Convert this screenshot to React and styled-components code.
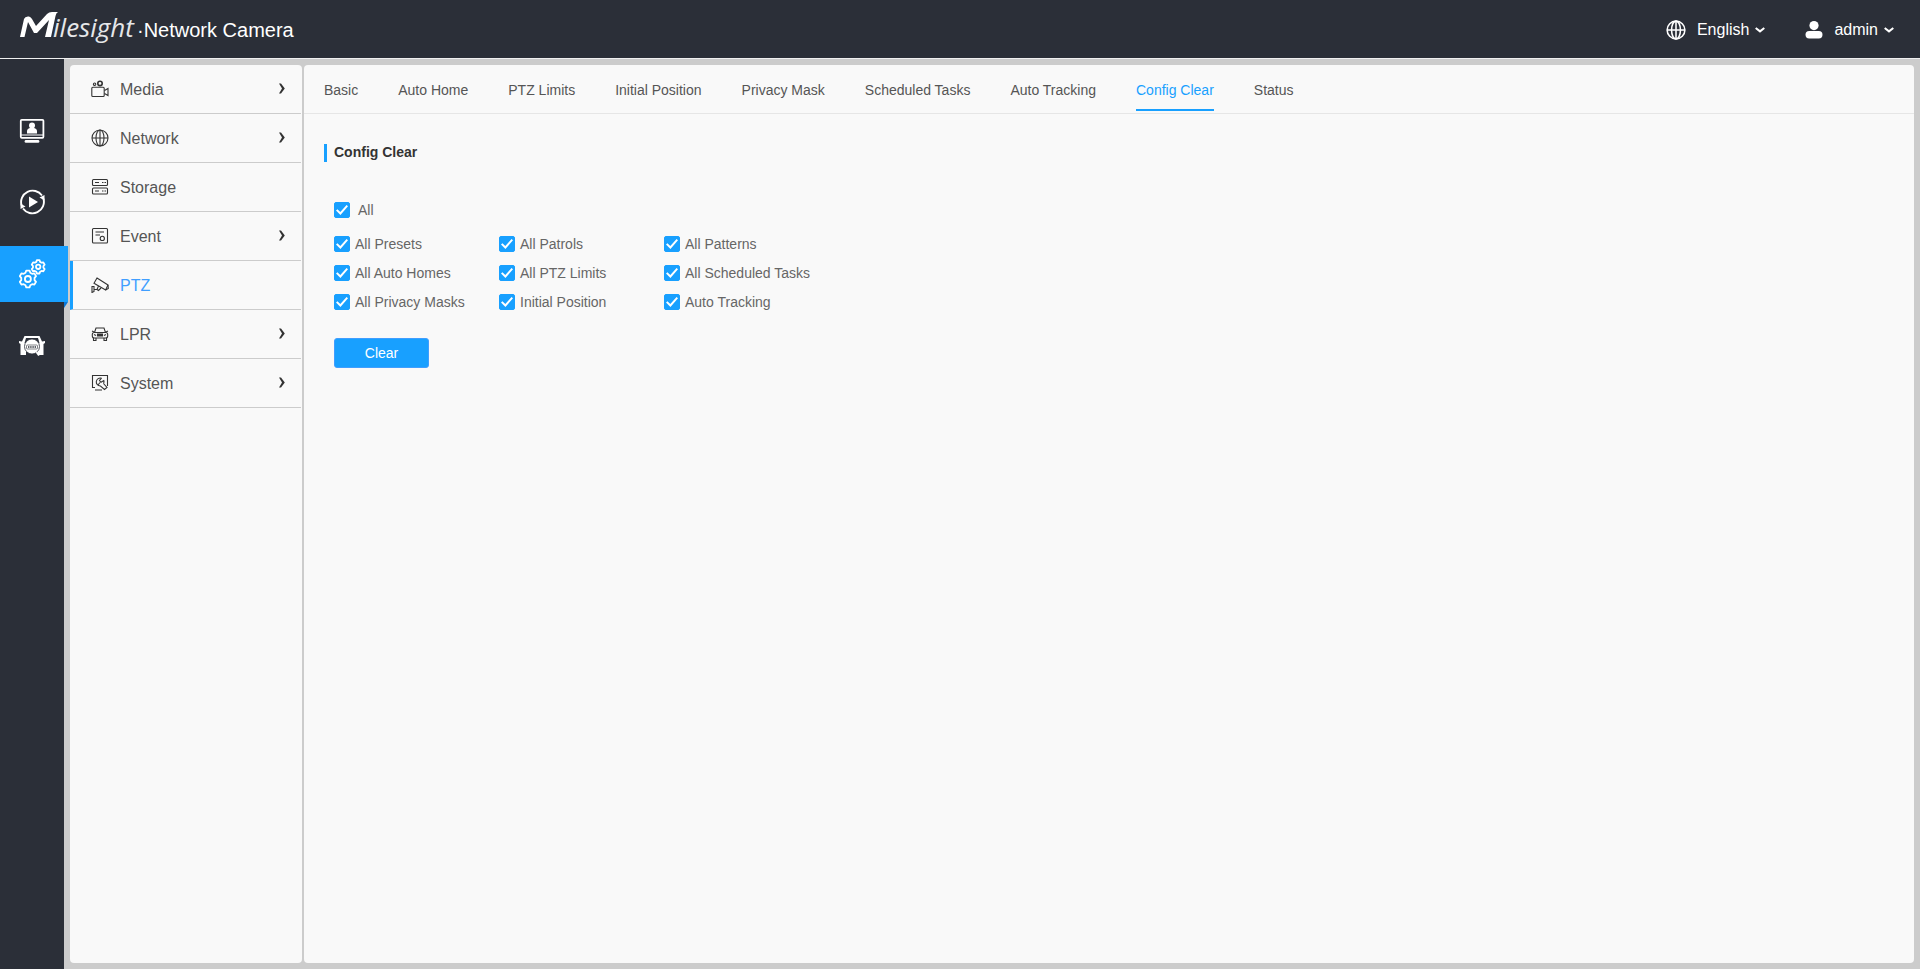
import { useState } from "react";
import styled, { createGlobalStyle } from "styled-components";

const tabs = [
    "Basic",
    "Auto Home",
    "PTZ Limits",
    "Initial Position",
    "Privacy Mask",
    "Scheduled Tasks",
    "Auto Tracking",
    "Config Clear",
    "Status",
];

const options = [
    "All Presets",
    "All Patrols",
    "All Patterns",
    "All Auto Homes",
    "All PTZ Limits",
    "All Scheduled Tasks",
    "All Privacy Masks",
    "Initial Position",
    "Auto Tracking",
];

const Logo = () => (
    <LogoMark viewBox="0 0 116 36" role="img" aria-label="Milesight">
        <path d="M0 25L4 7Q5 4 9 4.5Q11 5 12 7L16 14L27 2Q29 0 32 0H38Q36 1 35.5 4L31 25H25L29 8L17 21H14L8 10L4.5 25Z" fill="#fff" />
        <text x="33" y="25" fontSize="26" fontStyle="italic" fill="#e6e7e9">ilesight</text>
    </LogoMark>
);

const GlobeIcon = ({ size, width = 1 }) => (
    <svg width={size} height={size} viewBox="0 0 18 18" fill="none" stroke="currentColor" strokeWidth={width}>
        <circle cx="9" cy="9" r="8" />
        <ellipse cx="9" cy="9" rx="4" ry="8" />
        <path d="M1 9H17M9 1V17" />
    </svg>
);

const UserIcon = () => (
    <svg width="18" height="18" viewBox="0 0 18 18" fill="currentColor">
        <circle cx="9" cy="4.6" r="4.6" />
        <rect x="0.5" y="10" width="17" height="7.5" rx="3.7" />
    </svg>
);

const Caret = () => (
    <svg width="10" height="6" viewBox="0 0 10 6" fill="none" stroke="currentColor" strokeWidth="2">
        <path d="M0.7 1L5 4.4L9.3 1" />
    </svg>
);

const Arrow = () => (
    <svg width="6" height="12" viewBox="0 0 6 12" fill="#333">
        <path d="M0 0.5H2L5.8 5.5L2 10.5H0L3 5.5Z" />
    </svg>
);

const LiveIcon = () => (
    <svg width="26" height="26" viewBox="0 0 26 26" fill="none" stroke="#fff">
        <rect x="1.8" y="2.8" width="22.6" height="18" rx="1" strokeWidth="1.8" />
        <path d="M2 18H24.5" strokeWidth="1" />
        <path d="M7 24.4H19" strokeWidth="2.8" strokeLinecap="round" />
        <circle cx="13" cy="8.6" r="3" fill="#fff" stroke="none" />
        <path d="M8 16.5V14Q8 11 13 10.5Q18 11 18 14V16.5Z" fill="#fff" stroke="none" />
    </svg>
);

const PlaybackIcon = () => (
    <svg width="27" height="26" viewBox="0 0 27 26" fill="none" stroke="#fff" strokeWidth="1.9">
        <path d="M2.6 16.5A11.5 11.5 0 0 1 23 6.5" />
        <path d="M24.4 9.5A11.5 11.5 0 0 1 4 19.5" />
        <path d="M20.5 8.5L25.5 11.5V6Z" fill="#fff" stroke="none" />
        <path d="M6.5 17.5L1.5 14.5V20Z" fill="#fff" stroke="none" />
        <path d="M10 7.5V18.5L19 13Z" fill="#fff" stroke="none" />
    </svg>
);

// six teeth, one of them pointing straight up
const gearPath = (radius) => {
    const points = [];
    for (let tooth = 0; tooth < 6; tooth++) {
        [[-21, 0.78], [-11, 1], [11, 1], [21, 0.78]].forEach(([shift, scale]) => {
            const angle = ((tooth * 60 - 90 + shift) * Math.PI) / 180;
            const x = Math.cos(angle) * radius * scale;
            const y = Math.sin(angle) * radius * scale;
            points.push(`${x.toFixed(2)} ${y.toFixed(2)}`);
        });
    }
    return `M${points.join("L")}Z`;
};

const SettingsIcon = () => (
    <svg width="28" height="30" viewBox="0 0 28 30" fill="none" stroke="#fff" strokeWidth="1.8" strokeLinejoin="round">
        <path d={gearPath(8.6)} transform="translate(8.9 20)" />
        <circle cx="8.9" cy="20" r="3" />
        <path d={gearPath(6.8)} transform="translate(19.2 7.8)" fill="#18a0ff" />
        <circle cx="19.2" cy="7.8" r="2.2" />
    </svg>
);

const PlateIcon = () => (
    <svg width="26" height="22" viewBox="0 0 26 22" fill="none">
        <path d="M5.5 1H20.5L23 6.5L26 6V8L24.5 9V20H19V17H7V20H1.5V9L0 8V6L3 6.5Z" fill="#fff" />
        <path d="M7 3H19L20.5 8H5.5Z" fill="#2b2f38" />
        <circle cx="13" cy="11.5" r="7.5" fill="#fff" stroke="#2b2f38" strokeWidth="0.8" />
        <rect x="7.5" y="10" width="11" height="4" rx="1" stroke="#2b2f38" strokeWidth="0.6" />
        <path d="M9 12H17" stroke="#2b2f38" strokeWidth="1.4" strokeDasharray="1.4 0.8" />
        <path d="M17.5 17L20 20.5" stroke="#fff" strokeWidth="2" />
    </svg>
);

const MediaIcon = () => (
    <MenuSvg>
        <rect x="0.8" y="7.3" width="12.4" height="9.2" rx="1" />
        <path d="M13.5 10.5L17 8.5V15.5L13.5 13.5" />
        <circle cx="9" cy="3.4" r="2.2" strokeWidth="1.6" />
        <circle cx="3.6" cy="4.2" r="1.2" />
    </MenuSvg>
);

const StorageIcon = () => (
    <MenuSvg>
        <rect x="1.5" y="1.5" width="15" height="6" rx="1" />
        <rect x="1.5" y="10" width="15" height="6" rx="1" />
        <path d="M4 4.5H8M11 4.5H12.5M13.5 4.5H15M4 13H8M11 13H12.5M13.5 13H15" />
    </MenuSvg>
);

const EventIcon = () => (
    <MenuSvg>
        <rect x="1.5" y="1.5" width="15" height="14.5" rx="1" />
        <path d="M4.5 5H13M4.5 8H9" />
        <circle cx="11.3" cy="11.4" r="2.1" />
    </MenuSvg>
);

const PtzIcon = () => (
    <MenuSvg>
        <path d="M6 2L17 9L14.6 14L3 7.2Z" />
        <path d="M17 9L17.3 12.5L14.6 14" />
        <path d="M1 10V17M1 10.5H3V15.5L1 16.5M3.5 13.5H6L7.5 10M6 13.5L7.5 14.5L10 12" />
    </MenuSvg>
);

const LprIcon = () => (
    <MenuSvg>
        <path d="M3.5 7.5L5 3H13L14.5 7.5M1 6L3 7M17 6L15 7" />
        <rect x="1.3" y="7.5" width="15.4" height="5.5" rx="2" />
        <path d="M2.5 13V15.5H5V13M13 13V15.5H15.5V13M3 9.5L5 10.5M15 9.5L13 10.5" />
        <path d="M6.5 9H11.5V11H6.5Z" fill="#333" />
    </MenuSvg>
);

const SystemIcon = () => (
    <MenuSvg>
        <path d="M4 13.5H1.5V1.5H16.5V12M4 16H11" />
        <path d="M10.5 4.2A4 4 0 1 0 9.5 12L13.5 15.5L16 13.5L12.5 9.5" />
        <path d="M10.5 4.2L8.5 6.5L10 8.3L12.8 6.5Q13.4 8 12.5 9.5M7 11L9 8.5" />
    </MenuSvg>
);

const menu = [
    { name: "Media", icon: <MediaIcon />, more: true },
    { name: "Network", icon: <GlobeIcon size={18} width={1.1} />, more: true },
    { name: "Storage", icon: <StorageIcon /> },
    { name: "Event", icon: <EventIcon />, more: true },
    { name: "PTZ", icon: <PtzIcon />, active: true },
    { name: "LPR", icon: <LprIcon />, more: true },
    { name: "System", icon: <SystemIcon />, more: true },
];

const rail = [
    { name: "Live view", icon: <LiveIcon /> },
    { name: "Playback", icon: <PlaybackIcon /> },
    { name: "Settings", icon: <SettingsIcon />, active: true },
    { name: "License plates", icon: <PlateIcon /> },
];

const App = () => {
    const [checked, setChecked] = useState(options.map(() => true));
    const allChecked = checked.every(Boolean);

    const toggle = (index) => setChecked(checked.map((value, i) => (i === index ? !value : value)));
    const toggleAll = () => setChecked(options.map(() => !allChecked));

    return (
        <Page>
            <GlobalStyle />
            <Header>
                <Brand>
                    <Logo />
                    <span>·Network Camera</span>
                </Brand>
                <Account>
                    <AccountButton>
                        <GlobeIcon size={20} width={1.4} />
                        <span>English</span>
                        <Caret />
                    </AccountButton>
                    <AccountButton>
                        <UserIcon />
                        <span>admin</span>
                        <Caret />
                    </AccountButton>
                </Account>
            </Header>
            <Body>
                <Rail>
                    {rail.map((item) => (
                        <RailLink key={item.name} href="#" aria-label={item.name} $active={item.active}>
                            {item.icon}
                        </RailLink>
                    ))}
                </Rail>
                <Panels>
                    <Menu>
                        {menu.map((item) => (
                            <MenuLink key={item.name} href="#" $active={item.active}>
                                <MenuIcon>{item.icon}</MenuIcon>
                                <span>{item.name}</span>
                                {item.more && <Arrow />}
                            </MenuLink>
                        ))}
                    </Menu>
                    <Content>
                        <Tabs>
                            {tabs.map((tab) => (
                                <Tab key={tab} href="#" $active={tab === "Config Clear"}>{tab}</Tab>
                            ))}
                        </Tabs>
                        <Section>
                            <Title>Config Clear</Title>
                            <Form>
                                <CheckLabel $gap={8}>
                                    <Checkbox checked={allChecked} onChange={toggleAll} />
                                    All
                                </CheckLabel>
                                <Options>
                                    {options.map((option, index) => (
                                        <CheckLabel key={option} $gap={5}>
                                            <Checkbox checked={checked[index]} onChange={() => toggle(index)} />
                                            {option}
                                        </CheckLabel>
                                    ))}
                                </Options>
                                <ClearButton>Clear</ClearButton>
                            </Form>
                        </Section>
                    </Content>
                </Panels>
            </Body>
        </Page>
    );
};

const GlobalStyle = createGlobalStyle`
    * {
        box-sizing: border-box;
    }

    body {
        margin: 0;
        font-family: "Liberation Sans", Arial, sans-serif;
        font-size: 14px;
        color: #555;
    }

    a {
        color: inherit;
        text-decoration: none;
    }

    button, input {
        font: inherit;
    }

    svg {
        flex-shrink: 0;
    }
`;

const Page = styled.div`
    min-height: 100vh;
    display: flex;
    flex-direction: column;
    background: #ccc;
`;

const Header = styled.header`
    height: 59px;
    display: flex;
    align-items: center;
    justify-content: space-between;
    padding: 2px 26px 0 20px;
    background: #2b2f38;
    border-bottom: 1px solid #f0f0f0;
    color: #fff;
`;

const Brand = styled.div`
    display: flex;
    align-items: center;
    gap: 1px;
    font-size: 20px;
`;

const LogoMark = styled.svg`
    width: 116px;
    height: 36px;
    overflow: visible;
    font-family: "Open Sans", sans-serif;
`;

const Account = styled.div`
    display: flex;
    gap: 40px;
`;

const AccountButton = styled.button`
    display: flex;
    align-items: center;
    padding: 0;
    border: none;
    background: none;
    color: #fff;
    font-size: 16px;
    cursor: pointer;

    span {
        margin: 0 6px 0 11px;
    }
`;

const Body = styled.div`
    flex: 1;
    display: flex;
`;

const Rail = styled.nav`
    width: 64px;
    display: flex;
    flex-direction: column;
    gap: 16px;
    padding-top: 43px;
    background: #2b2f38;
`;

const RailLink = styled.a`
    position: relative;
    width: ${(props) => (props.$active ? "68px" : "64px")};
    height: 56px;
    display: flex;
    align-items: center;
    padding-left: 19px;
    background: ${(props) => (props.$active ? "#18a0ff" : "none")};

    &::after {
        content: "";
        display: ${(props) => (props.$active ? "block" : "none")};
        position: absolute;
        top: 100%;
        right: 0;
        border-top: 6px solid #0a78d8;
        border-right: 4px solid transparent;
    }
`;

const Panels = styled.div`
    flex: 1;
    display: flex;
    gap: 2px;
    padding: 6px;
`;

const Menu = styled.nav`
    width: 232px;
    padding-right: 1px;
    background: #f9f9f9;
    border-radius: 4px;
`;

const MenuLink = styled.a`
    height: 49px;
    display: flex;
    align-items: center;
    padding: 0 16px 0 ${(props) => (props.$active ? "18px" : "21px")};
    border-bottom: 1px solid #ccc;
    border-left: ${(props) => (props.$active ? "3px solid #18a0ff" : "none")};
    color: ${(props) => (props.$active ? "#409eff" : "#555")};
    font-size: 16px;

    & > span {
        flex: 1;
        margin-left: 11px;
        padding-top: 2px;
        line-height: 20px;
    }
`;

const MenuIcon = styled.div`
    width: 18px;
    display: flex;
    color: #333;
`;

const MenuSvg = styled.svg.attrs({ viewBox: "0 0 18 18" })`
    width: 18px;
    height: 18px;
    fill: none;
    stroke: #333;
    stroke-width: 1.1;
`;

const Content = styled.main`
    flex: 1;
    background: #f9f9f9;
    border-radius: 4px;
`;

const Tabs = styled.nav`
    height: 49px;
    display: flex;
    gap: 40px;
    padding: 0 20px;
    border-bottom: 1px solid #e6e6e6;
`;

const Tab = styled.a`
    height: 46px;
    padding-top: 4px;
    line-height: 42px;
    border-bottom: 2px solid ${(props) => (props.$active ? "#18a0ff" : "transparent")};
    color: ${(props) => (props.$active ? "#18a0ff" : "#555")};
`;

const Section = styled.section`
    padding: 30px 20px;
`;

const Title = styled.h2`
    margin: 0;
    padding: 0 0 2px 7px;
    border-left: 3px solid #18a0ff;
    color: #333;
    font-size: 14px;
    line-height: 16px;
`;

const Form = styled.div`
    padding: 40px 10px 0;
`;

const CheckLabel = styled.label`
    width: max-content;
    display: flex;
    align-items: center;
    gap: ${(props) => props.$gap}px;
    line-height: 16px;
    color: #666;
`;

const Checkbox = styled.input.attrs({ type: "checkbox" })`
    appearance: none;
    width: 16px;
    height: 16px;
    margin: 0;
    display: grid;
    place-items: center;
    border: 1px solid #18a0ff;
    border-radius: 2px;
    background: #fff;

    &:checked {
        background: #18a0ff;
    }

    &:checked::before {
        content: "";
        width: 12px;
        height: 10px;
        background: #fff;
        clip-path: polygon(0 56%, 12% 42%, 36% 70%, 88% 0, 100% 12%, 37% 100%);
    }
`;

const Options = styled.div`
    display: grid;
    grid-template-columns: repeat(3, 165px);
    row-gap: 13px;
    padding: 18px 0 28px;
`;

const ClearButton = styled.button`
    width: 95px;
    height: 30px;
    border: 1px solid #409eff;
    border-radius: 3px;
    background: #18a0ff;
    color: #fff;
    cursor: pointer;
`;

export default App;
